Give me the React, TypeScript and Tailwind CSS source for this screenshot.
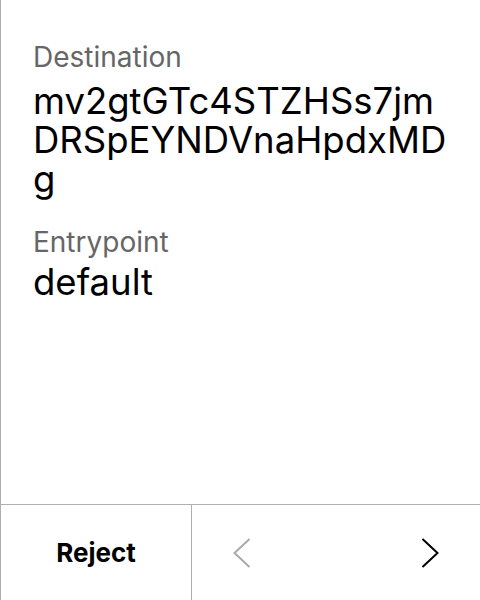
import React from "react";

export default function App() {
  return (
    <div
      className="w-[480px] h-[600px] flex flex-col bg-white border-l border-[#b0b0b0] text-black"
      style={{ fontFamily: "Inter, 'Noto Sans', sans-serif" }}
    >
      <div className="flex-1 flex flex-col px-8 pt-[40px]">
        <div className="text-[28px] leading-[34px] text-[#666666]">Destination</div>
        <div className="text-[36.5px] leading-[39px] break-all mt-[8px]">
          mv2gtGTc4STZHSs7jmDRSpEYNDVnaHpdxMDg
        </div>
        <div className="text-[28px] leading-[34px] text-[#666666] mt-[26px]">Entrypoint</div>
        <div className="text-[36.5px] leading-[39px] break-all mt-[4px]">default</div>
      </div>
      <div className="h-[96px] flex border-t border-[#b0b0b0]">
        <button className="w-[191px] flex items-center justify-center border-r border-[#b0b0b0] text-[26px] font-bold">
          Reject
        </button>
        <div className="flex-1 flex items-center justify-between px-[41px]">
          <svg width="18" height="30" viewBox="0 0 18 30" fill="none">
            <polyline points="16.5,1 1.5,15 16.5,29" stroke="#aaaaaa" strokeWidth="2" />
          </svg>
          <svg width="18" height="30" viewBox="0 0 18 30" fill="none">
            <polyline points="1.5,1 16.5,15 1.5,29" stroke="#000000" strokeWidth="2" />
          </svg>
        </div>
      </div>
    </div>
  );
}
